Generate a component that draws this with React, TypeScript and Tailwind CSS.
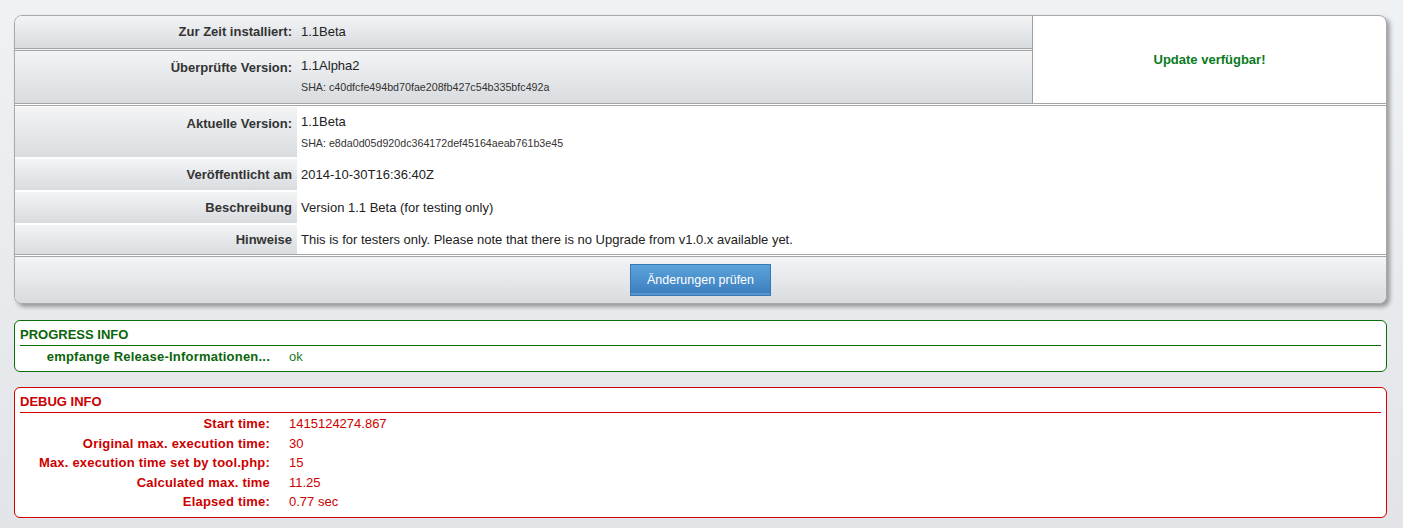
import type { ReactNode } from "react";

const cellBg = "bg-linear-to-b from-[#f2f4f6] to-[#d9dcdf]";

interface InfoRow {
  label: string;
  value: string;
  sha?: string;
  tall?: boolean;
}

const releaseRows: InfoRow[] = [
  {
    label: "Aktuelle Version:",
    value: "1.1Beta",
    sha: "e8da0d05d920dc364172def45164aeab761b3e45",
    tall: true,
  },
  { label: "Veröffentlicht am", value: "2014-10-30T16:36:40Z" },
  { label: "Beschreibung", value: "Version 1.1 Beta (for testing only)" },
  {
    label: "Hinweise",
    value: "This is for testers only. Please note that there is no Upgrade from v1.0.x available yet.",
  },
];

const debugRows = [
  { label: "Start time:", value: "1415124274.867" },
  { label: "Original max. execution time:", value: "30" },
  { label: "Max. execution time set by tool.php:", value: "15" },
  { label: "Calculated max. time", value: "11.25" },
  { label: "Elapsed time:", value: "0.77 sec" },
];

function Sha({ hash }: { hash: string }) {
  return <div className="text-[10.7px] leading-[12px] text-[#333] mt-[8px]">SHA: {hash}</div>;
}

function InfoBox({ title, color, children }: { title: string; color: "green" | "red"; children: ReactNode }) {
  const border = color === "green" ? "border-[#0a6e0a]" : "border-[#d40000]";
  const text = color === "green" ? "text-[#0b650b]" : "text-[#cc0000]";
  return (
    <div className={`bg-white border ${border} rounded-[6px] px-[5px] pt-[6px] pb-[5px]`}>
      <div className={`font-bold text-[13px] leading-[16px] ${text} border-b ${border} pb-[2px]`}>{title}</div>
      {children}
    </div>
  );
}

export default function App() {
  return (
    <div className="w-[1403px] h-[528px] bg-linear-to-b from-[#eff2f5] to-[#e2e4e7] pt-[15px] pl-[14px] pr-[16px] font-['Liberation_Sans',Arial,sans-serif] text-[13px] text-[#222]">
      {/* Update check panel */}
      <div className="bg-white border border-[#a9a9a9] rounded-[8px] overflow-hidden shadow-[3px_3px_4px_rgba(0,0,0,0.35)]">
        <div className="flex border-b-[3px] border-double border-[#a5a5a5]">
          <div className="flex-1 border-r border-[#a0a0a0]">
            <div className={`grid grid-cols-[282px_1fr] h-[35px] items-center ${cellBg} border-b-[3px] border-double border-[#a5a5a5]`}>
              <div className="text-right font-bold text-[#333] pr-[5px]">Zur Zeit installiert:</div>
              <div className="pl-[4px]">1.1Beta</div>
            </div>
            <div className={`grid grid-cols-[282px_1fr] h-[52px] ${cellBg}`}>
              <div className="text-right font-bold text-[#333] pr-[5px] pt-[7px]">Überprüfte Version:</div>
              <div className="pl-[4px] pt-[7px]">
                <div className="leading-[15px]">1.1Alpha2</div>
                <Sha hash="c40dfcfe494bd70fae208fb427c54b335bfc492a" />
              </div>
            </div>
          </div>
          <div className="w-[353px] flex items-center justify-center font-bold text-[#0a7a1e]">Update verfügbar!</div>
        </div>

        {releaseRows.map((row, i) => (
          <div
            key={row.label}
            className={`grid grid-cols-[282px_1fr] ${row.tall ? "h-[52px]" : "h-[33px]"} ${
              i === releaseRows.length - 1 ? "border-b-[3px] border-double border-[#a5a5a5]" : ""
            }`}
          >
            <div
              className={`text-right font-bold text-[#333] pr-[5px] ${cellBg} border-t border-white ${
                i < releaseRows.length - 1 ? "border-b border-[#c3c6c9]" : ""
              } ${row.tall ? "pt-[7px]" : "flex items-center justify-end"}`}
            >
              {row.label}
            </div>
            <div className={`pl-[4px] ${row.tall ? "pt-[8px]" : "flex items-center"}`}>
              <div className="leading-[15px]">{row.value}</div>
              {row.sha && <Sha hash={row.sha} />}
            </div>
          </div>
        ))}

        <div className={`h-[46px] flex items-center justify-center ${cellBg}`}>
          <button className="w-[141px] h-[32px] border border-[#3a78b5] bg-linear-to-b from-[#5ba3db] to-[#3c7dbe] shadow-[inset_0_-2px_0_rgba(120,170,220,0.55)] text-white text-[12.5px]">
            Änderungen prüfen
          </button>
        </div>
      </div>

      {/* Progress output */}
      <div className="mt-[16px]">
        <InfoBox title="PROGRESS INFO" color="green">
          <div className="grid grid-cols-[250px_1fr] gap-x-[19px] leading-[19px] pt-[1px]">
            <div className="text-right font-bold tracking-[0.22px] text-[#0b650b]">empfange Release-Informationen...</div>
            <div className="text-[#237a23]">ok</div>
          </div>
        </InfoBox>
      </div>

      {/* Debug output */}
      <div className="mt-[15px]">
        <InfoBox title="DEBUG INFO" color="red">
          <div className="grid grid-cols-[250px_1fr] gap-x-[19px] leading-[19.5px] pt-[1px] text-[#cc0000]">
            {debugRows.map((row) => (
              <div key={row.label} className="contents">
                <div className="text-right font-bold tracking-[0.2px]">{row.label}</div>
                <div>{row.value}</div>
              </div>
            ))}
          </div>
        </InfoBox>
      </div>
    </div>
  );
}
